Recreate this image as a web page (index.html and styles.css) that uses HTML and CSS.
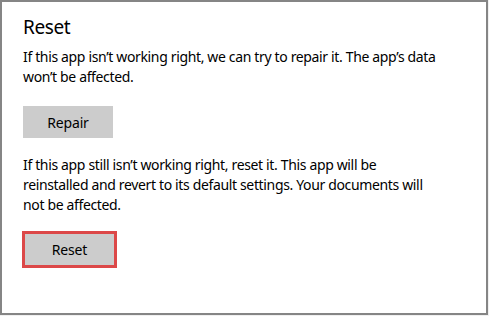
FILE: index.html
```html
<!DOCTYPE html>
<html>
<head>
<meta charset="utf-8">
<link rel="stylesheet" href="styles.css">
</head>
<body>
<div class="frame">
  <h1 class="title">Reset</h1>
  <p class="text">If this app isn’t working right, we can try to repair it. The app’s data<br>won’t be affected.</p>
  <button class="btn btn-repair">Repair</button>
  <p class="text text-second">If this app still isn’t working right, reset it. This app will be<br>reinstalled and revert to its default settings. Your documents will<br>not be affected.</p>
  <button class="btn btn-reset">Reset</button>
</div>
</body>
</html>
```
FILE: styles.css
```css
html, body {
  margin: 0;
  padding: 0;
  background: #f0f0f0;
}
body {
  width: 489px;
  height: 316px;
  font-family: "Noto Sans", "Open Sans", sans-serif;
  color: #000;
}
.frame {
  box-sizing: border-box;
  width: 488px;
  height: 315px;
  border: 2px solid #858585;
  background: #fff;
  padding: 11px 0 0 21px;
}
.title {
  margin: 0;
  font-size: 19px;
  font-weight: 400;
  line-height: 28px;
  letter-spacing: -0.4px;
}
.text {
  margin: 6px 0 0 0;
  font-size: 14px;
  line-height: 20px;
  letter-spacing: -0.35px;
}
.text-second {
  margin-top: 17px;
}
.btn {
  display: block;
  font-family: inherit;
  font-size: 14px;
  letter-spacing: -0.2px;
  color: #000;
  background: #cccccc;
  border: none;
  padding: 0;
  margin: 0;
}
.btn-repair {
  width: 90px;
  height: 32px;
  margin-top: 19px;
}
.btn-reset {
  box-sizing: border-box;
  width: 95px;
  height: 37px;
  border: 3px solid #dc4848;
  margin-top: 16px;
  margin-left: -1px;
}
```
